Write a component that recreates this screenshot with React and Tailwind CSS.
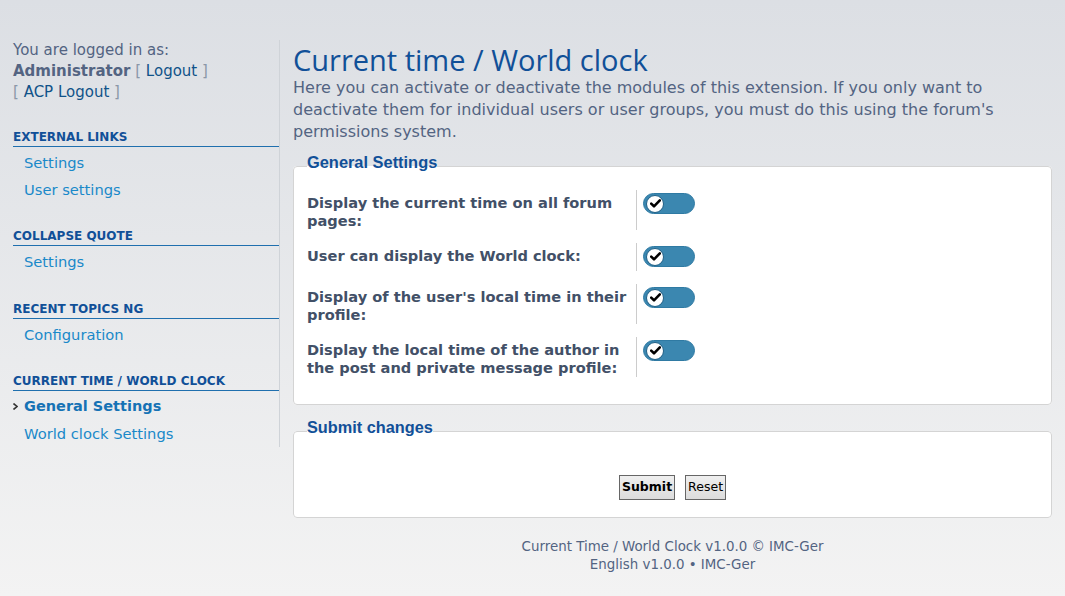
import React from 'react';

const sections = [
  { title: 'EXTERNAL LINKS', links: ['Settings', 'User settings'], mt: 'mt-[26px]' },
  { title: 'COLLAPSE QUOTE', links: ['Settings'], mt: 'mt-[25px]' },
  { title: 'RECENT TOPICS NG', links: ['Configuration'], mt: 'mt-[26px]' },
  { title: 'CURRENT TIME / WORLD CLOCK', links: ['General Settings', 'World clock Settings'], active: 0, mt: 'mt-[25px]' },
];

const options = [
  "Display the current time on all forum pages:",
  "User can display the World clock:",
  "Display of the user's local time in their profile:",
  "Display the local time of the author in the post and private message profile:",
];

const Toggle = () => (
  <div className="w-[52px] h-[21px] rounded-full bg-[#3b87b0] border border-[#2f7aa3] flex items-center pl-[2px]">
    <div className="w-[18px] h-[18px] rounded-full bg-white border-[1.5px] border-[#1f5f86] flex items-center justify-center">
      <svg width="11" height="9" viewBox="0 0 11 9">
        <path d="M1.2 4.6 L4 7.3 L9.8 1.4" fill="none" stroke="#000" strokeWidth="2.6" strokeLinecap="round" strokeLinejoin="round" />
      </svg>
    </div>
  </div>
);

export default function App() {
  return (
    <div className="min-h-[596px] bg-gradient-to-b from-[#dcdfe4] to-[#f3f3f3] flex px-[13px] pt-[40px] font-['DejaVu_Sans',sans-serif] text-[#536482]">
      {/* sidebar */}
      <aside className="w-[267px] shrink-0 border-r border-[#cfd3d8] self-start">
        <div className="text-[15px] leading-[21px]">
          <p>You are logged in as:</p>
          <p>
            <b>Administrator</b> <span className="text-[#8b97a8]">[</span>{' '}
            <span className="text-[#105289]">Logout</span> <span className="text-[#8b97a8]">]</span>
          </p>
          <p>
            <span className="text-[#8b97a8]">[</span> <span className="text-[#105289]">ACP Logout</span>{' '}
            <span className="text-[#8b97a8]">]</span>
          </p>
        </div>
        {sections.map((s) => (
          <div key={s.title}>
            <h3 className={`${s.mt} text-[12px] leading-[16px] pb-[1px] font-bold text-[#115098] border-b border-[#1f6fae]`}>
              {s.title}
            </h3>
            <ul className="pt-[2px]">
              {s.links.map((l, j) => (
                <li key={l} className="h-[27px] leading-[27px] flex items-center">
                  <span className="w-[11px] flex items-center justify-start">
                    {s.active === j && (
                      <svg width="5" height="7" viewBox="0 0 5 7">
                        <path d="M0.5 0.5 L4 3.5 L0.5 6.5" fill="none" stroke="#333" strokeWidth="1.6" />
                      </svg>
                    )}
                  </span>
                  <span className={s.active === j ? 'font-bold text-[14.5px] text-[#1672b5]' : 'text-[14.7px] text-[#1a89c9]'}>{l}</span>
                </li>
              ))}
            </ul>
          </div>
        ))}
      </aside>

      {/* main */}
      <main className="flex-1 ml-[13px]">
        <h1 className="mt-[2px] text-[29px] leading-[35px] text-[#115098] font-['Open_Sans',sans-serif]">
          Current time / World clock
        </h1>
        <p className="text-[16px] leading-[22px] pr-[20px]">
          Here you can activate or deactivate the modules of this extension. If you only want to deactivate them for individual users or user groups, you must do this using the forum's permissions system.
        </p>

        <fieldset className="mt-[9px] bg-white border border-[#d4d4d4] rounded-[4px] px-[13px] pt-[10px] pb-[27px]">
          <legend className="pb-[8px] leading-[20px] font-bold text-[#115098] font-['Liberation_Sans',sans-serif] text-[16.4px]">
            General Settings
          </legend>
          <div className="flex flex-col gap-[13px]">
            {options.map((o) => (
              <div key={o} className="flex items-start">
                <div className="w-[330px] shrink-0 border-r border-[#cccccc] pt-[4px] min-h-[28px] leading-[18px] text-[14.6px] font-bold text-[#425067]">
                  {o}
                </div>
                <div className="pl-[6px] pt-[3px]">
                  <Toggle />
                </div>
              </div>
            ))}
          </div>
        </fieldset>

        <fieldset className="mt-[12px] bg-white border border-[#d4d4d4] rounded-[4px] px-[13px] pt-[30px] pb-[17px]">
          <legend className="pb-[8px] leading-[20px] font-bold text-[#115098] font-['Liberation_Sans',sans-serif] text-[16.3px]">
            Submit changes
          </legend>
          <div className="flex justify-center gap-[10px] text-[12.5px] text-black">
            <button className="h-[25px] px-[2px] border border-[#666] bg-gradient-to-b from-[#efefef] to-[#dcdcdc] font-bold">Submit</button>
            <button className="h-[25px] px-[2px] border border-[#666] bg-gradient-to-b from-[#efefef] to-[#dcdcdc]">Reset</button>
          </div>
        </fieldset>

        <div className="mt-[20px] text-center text-[13.4px] leading-[18px]">
          <p>Current Time / World Clock v1.0.0 © IMC-Ger</p>
          <p>English v1.0.0 • IMC-Ger</p>
        </div>
      </main>
    </div>
  );
}
